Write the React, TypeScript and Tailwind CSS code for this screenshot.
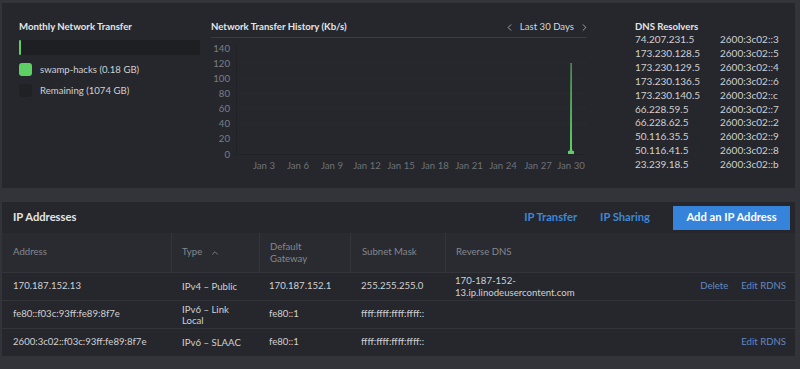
import React from "react";
import { ChevronLeft, ChevronRight, ChevronUp } from "lucide-react";

const dns: [string, string][] = [
  ["74.207.231.5", "2600:3c02::3"],
  ["173.230.128.5", "2600:3c02::5"],
  ["173.230.129.5", "2600:3c02::4"],
  ["173.230.136.5", "2600:3c02::6"],
  ["173.230.140.5", "2600:3c02::c"],
  ["66.228.59.5", "2600:3c02::7"],
  ["66.228.62.5", "2600:3c02::2"],
  ["50.116.35.5", "2600:3c02::9"],
  ["50.116.41.5", "2600:3c02::8"],
  ["23.239.18.5", "2600:3c02::b"],
];

const xLabels = ["Jan 3", "Jan 6", "Jan 9", "Jan 12", "Jan 15", "Jan 18", "Jan 21", "Jan 24", "Jan 27", "Jan 30"];
const xPos = [53, 87, 121, 156, 190, 224, 258, 292, 327, 360];
const yTicks = [140, 120, 100, 80, 60, 40, 20, 0];

const rows = [
  {
    address: "170.187.152.13",
    type: "IPv4 – Public",
    gateway: "170.187.152.1",
    mask: "255.255.255.0",
    rdns: true,
    del: true,
    edit: true,
  },
  {
    address: "fe80::f03c:93ff:fe89:8f7e",
    type: "IPv6 – Link Local",
    gateway: "fe80::1",
    mask: "ffff:ffff:ffff:ffff::",
    rdns: false,
    del: false,
    edit: false,
  },
  {
    address: "2600:3c02::f03c:93ff:fe89:8f7e",
    type: "IPv6 – SLAAC",
    gateway: "fe80::1",
    mask: "ffff:ffff:ffff:ffff::",
    rdns: false,
    del: false,
    edit: true,
  },
];

function TransferChart() {
  const yOf = (v: number) => 113 - (v * 106) / 140;
  return (
    <svg width="380" height="135" className="block">
      {yTicks.map((t) => (
        <g key={t}>
          <line x1="25" x2="375" y1={yOf(t)} y2={yOf(t)} stroke="#2a2c31" strokeWidth="1" strokeDasharray="2 2" />
          <text x="19" y={yOf(t) + 3.5} textAnchor="end" fontSize="9.6" fill="#7c7f85" fontFamily="Lato, sans-serif">
            {t}
          </text>
        </g>
      ))}
      <line x1="25.5" x2="25.5" y1="5" y2="113" stroke="#202226" strokeWidth="1" />
      <line x1="25" x2="375" y1="113.5" y2="113.5" stroke="#202226" strokeWidth="1" />
      {xLabels.map((l, i) => (
        <text key={l} x={xPos[i]} y="128" textAnchor="middle" fontSize="9.6" fill="#6f7278" fontFamily="Lato, sans-serif">
          {l}
        </text>
      ))}
      {/* spike on Jan 30 */}
      <path d="M357.5 113 L359 108 L359.6 22 L360.6 22 L361 108 L362.5 113 Z" fill="#5ecf64" />
      <rect x="357" y="110" width="6" height="3" fill="#5ecf64" />
    </svg>
  );
}

export default function App() {
  return (
    <div className="w-[800px] h-[369px] bg-[#32343a] pt-[3px] px-[2px] font-['Lato','Noto_Sans',sans-serif] overflow-hidden">
      {/* Top summary panel */}
      <div className="h-[185px] bg-[#25272c] flex pt-[17px] pl-[17px] mr-[3px]">
        {/* Monthly Network Transfer */}
        <div className="w-[181px]">
          <div className="text-[9.6px] leading-[14px] font-bold text-[#e4e5e7]">Monthly Network Transfer</div>
          <div className="mt-[6px] h-[15px] bg-[#1d1f23] flex">
            <div className="w-[2px] h-full bg-[#5ecf64] rounded-[1px]" />
          </div>
          <div className="mt-[8px] flex items-center gap-[8px] leading-[13px]">
            <div className="w-[13px] h-[13px] rounded-[3px] bg-[#5ecf64]" />
            <span className="text-[9.6px] text-[#d0d1d4]">swamp-hacks (0.18 GB)</span>
          </div>
          <div className="mt-[8px] flex items-center gap-[8px] leading-[13px]">
            <div className="w-[13px] h-[13px] rounded-[3px] bg-[#1f2125]" />
            <span className="text-[9.6px] text-[#d0d1d4]">Remaining (1074 GB)</span>
          </div>
        </div>

        {/* Network Transfer History */}
        <div className="ml-[11px] w-[376px]">
          <div className="flex items-center justify-between pb-[3px] border-b border-[#3a3c42]">
            <span className="text-[9.6px] leading-[14px] font-bold text-[#e4e5e7]">Network Transfer History (Kb/s)</span>
            <div className="flex items-center gap-[5px] text-[9.6px] leading-[14px] text-[#d6d7da] mr-[-3px]">
              <ChevronLeft size={11} strokeWidth={1.5} />
              <span>Last 30 Days</span>
              <ChevronRight size={11} strokeWidth={1.5} />
            </div>
          </div>
          <div className="mt-[3px]">
            <TransferChart />
          </div>
        </div>

        {/* DNS Resolvers */}
        <div className="ml-[48px]">
          <div className="text-[9.6px] leading-[13px] font-bold text-[#e4e5e7]">DNS Resolvers</div>
          <div>
            {dns.map(([a, b]) => (
              <div key={a} className="flex text-[10px] leading-[13.9px] text-[#cfd0d3]">
                <span className="w-[85px]">{a}</span>
                <span>{b}</span>
              </div>
            ))}
          </div>
        </div>
      </div>

      {/* IP Addresses */}
      <div className="mt-[14px] mr-[3px] bg-[#25272c]">
        <div className="h-[31px] flex items-center pl-[11px] pr-[5px]">
          <span className="text-[11.2px] font-bold text-[#e4e5e7]">IP Addresses</span>
          <div className="ml-auto flex items-center">
            <span className="text-[11.2px] font-bold text-[#3d87da]">IP Transfer</span>
            <span className="ml-[23px] text-[11.2px] font-bold text-[#3d87da]">IP Sharing</span>
            <button className="ml-[23px] h-[24px] w-[117px] bg-[#3683dc] text-white text-[11.2px] font-bold">
              Add an IP Address
            </button>
          </div>
        </div>

        <div className="grid grid-cols-[169px_88px_91px_95px_150px_1fr] text-[9.6px]">
          {/* header row */}
          <div className="h-[39px] bg-[#292b30] flex items-center pl-[11px] text-[#85888e]">Address</div>
          <div className="h-[39px] bg-[#292b30] border-l border-[#33353b] flex items-center gap-[8px] pl-[10px] text-[#85888e]">
            Type <ChevronUp size={10} strokeWidth={2} />
          </div>
          <div className="h-[39px] bg-[#292b30] border-l border-[#33353b] flex items-center pl-[10px] leading-[12px] text-[#85888e]">
            Default
            <br />
            Gateway
          </div>
          <div className="h-[39px] bg-[#292b30] border-l border-[#33353b] flex items-center pl-[11px] text-[#85888e]">Subnet Mask</div>
          <div className="h-[39px] bg-[#292b30] border-l border-[#33353b] flex items-center pl-[10px] text-[#85888e] col-span-2">
            Reverse DNS
          </div>

          {rows.map((r) => (
            <React.Fragment key={r.address}>
              <div className="h-[28px] border-t border-[#32343a] flex items-center pl-[11px] text-[#d0d1d4]">{r.address}</div>
              <div className="h-[28px] border-t border-[#32343a] flex items-center pl-[11px] pr-[12px] leading-[11px] text-[#d0d1d4]">
                {r.type}
              </div>
              <div className="h-[28px] border-t border-[#32343a] flex items-center pl-[10px] text-[#d0d1d4]">{r.gateway}</div>
              <div className="h-[28px] border-t border-[#32343a] flex items-center pl-[11px] text-[#d0d1d4]">{r.mask}</div>
              <div className="h-[28px] border-t border-[#32343a] flex items-center pl-[10px] leading-[12px] text-[#d0d1d4]">
                {r.rdns && (
                  <span>
                    170-187-152-
                    <br />
                    13.ip.linodeusercontent.com
                  </span>
                )}
              </div>
              <div className="h-[28px] border-t border-[#32343a] flex items-center justify-end gap-[13px] pr-[9px] text-[#6389c2]">
                {r.del && <span>Delete</span>}
                {r.edit && <span>Edit RDNS</span>}
              </div>
            </React.Fragment>
          ))}
        </div>
      </div>
    </div>
  );
}
